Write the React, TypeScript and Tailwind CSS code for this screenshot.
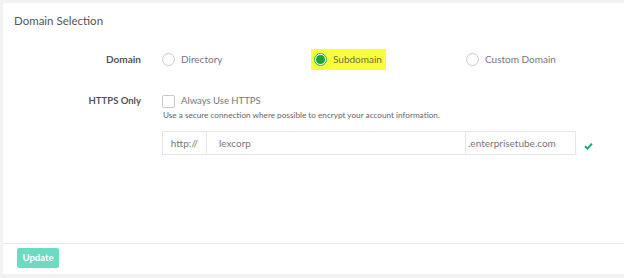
import React from "react";

function Radio({ checked }: { checked?: boolean }) {
  return (
    <span
      className={
        "inline-flex h-[13px] w-[13px] items-center justify-center rounded-full border " +
        (checked ? "border-[#22b14c] bg-white" : "border-[#c8c8c8] bg-white")
      }
    >
      {checked && <span className="h-[9px] w-[9px] rounded-full bg-[#16a82e]" />}
    </span>
  );
}

export default function App() {
  return (
    <div
      className="h-[278px] w-[624px] bg-[#f2f2f2] pl-[3px] pt-[3px] pb-[4px] text-[#777]"
      style={{ fontFamily: "Lato, 'Open Sans', sans-serif" }}
    >
      <div className="flex h-full flex-col bg-white">
        <div className="flex-1">
          <div className="px-[11px] pt-[10px] text-[11.5px] leading-[16px] text-[#555]">Domain Selection</div>
          <div className="mt-[20px] flex items-center">
            <div className="w-[138px] text-right text-[10px] font-bold text-[#555]">Domain</div>
            <div className="ml-[21px] flex items-center">
              <div className="flex w-[149px] items-center gap-[6px] text-[10px]">
                <Radio />
                <span>Directory</span>
              </div>
              <div className="flex h-[21px] w-[75px] items-center gap-[6px] bg-[#faff3b] pl-[3px] text-[10px] text-[#6e6e3a]">
                <Radio checked />
                <span>Subdomain</span>
              </div>
              <div className="ml-[80px] flex items-center gap-[6px] text-[10px]">
                <Radio />
                <span>Custom Domain</span>
              </div>
            </div>
          </div>
          <div className="mt-[24px] flex">
            <div className="w-[138px] text-right text-[9.5px] font-bold leading-[14px] text-[#555]">HTTPS Only</div>
            <div className="ml-[21px] flex flex-col">
              <div className="flex items-center gap-[6px] text-[9.5px] leading-[14px]">
                <span className="h-[13px] w-[13px] rounded-[2px] border border-[#c8c8c8] bg-white" />
                <span>Always Use HTTPS</span>
              </div>
              <div className="mt-[1px] pl-[1px] text-[8.2px] leading-[12px] text-[#666]">
                Use a secure connection where possible to encrypt your account information.
              </div>
              <div className="mt-[10px] flex items-center">
                <div className="flex h-[24px] w-[414px] border border-[#e6e6e6] text-[10px]">
                  <div className="flex w-[44px] items-center justify-center border-r border-[#e6e6e6]">http://</div>
                  <div className="flex flex-1 items-center pl-[12px]">lexcorp</div>
                  <div className="flex w-[110px] items-center border-l border-[#e6e6e6] pl-[2px] text-[10px]">
                    .enterprisetube.com
                  </div>
                </div>
                <svg className="ml-[8px] mt-[6px]" width="9" height="8" viewBox="0 0 9 8">
                  <path d="M1 4.2 L3.4 6.6 L8 1.6" fill="none" stroke="#1aa37a" strokeWidth="2" />
                </svg>
              </div>
            </div>
          </div>
        </div>
        <div className="flex h-[31px] items-start border-t border-[#e8e8e8] pl-[14px] pt-[4px]">
          <div className="flex h-[20px] w-[42px] items-center justify-center rounded-[2px] bg-[#6ddbc2] text-[9.5px] font-bold text-white">
            Update
          </div>
        </div>
      </div>
    </div>
  );
}
